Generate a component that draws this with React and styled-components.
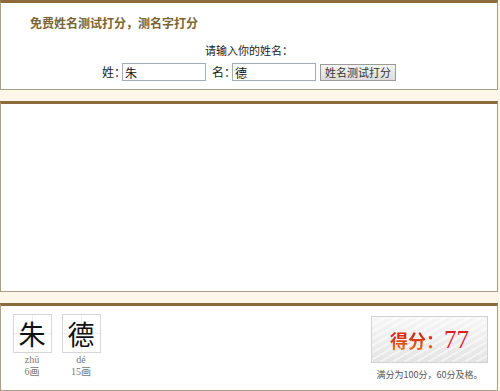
import React from "react";
import styled, { createGlobalStyle } from "styled-components";

const GlobalStyle = createGlobalStyle`
  html, body {
    margin: 0;
    padding: 0;
    background: #fcf7e8;
    font-family: "Noto Sans CJK SC", "Liberation Sans", sans-serif;
    font-size: 12px;
    color: #222;
  }
`;

const Page = styled.div`
  width: 498px;
  display: flex;
  flex-direction: column;
  gap: 11px;
`;

const Panel = styled.section`
  box-sizing: border-box;
  height: ${({ $h }) => $h}px;
  background: #fff;
  border: 1px solid #aa9f80;
  border-top: 3px solid #8b6b3c;
`;

const Head = styled(Panel)`
  padding: 12px 0 0 29px;
`;

const Title = styled.h1`
  margin: 0;
  font-size: 12px;
  font-weight: bold;
  color: #7a6634;
  line-height: 16px;
`;

const Prompt = styled.div`
  margin: 12px 0 0 -29px;
  text-align: center;
  font-size: 11px;
  line-height: 14px;
`;

const FormRow = styled.div`
  margin: 6px 0 0 -29px;
  display: flex;
  justify-content: center;
  align-items: center;
`;

const Label = styled.label`
  width: 20px;
  white-space: nowrap;
  line-height: 18px;
`;

const NameInput = styled.input`
  box-sizing: border-box;
  width: 84px;
  height: 18px;
  margin: 0 ${({ $gap }) => $gap}px 0 0;
  padding: 0 2px;
  border: 1px solid #a5acb5;
  font-family: inherit;
  font-size: 12px;
  color: #111;
`;

const Submit = styled.button`
  box-sizing: border-box;
  width: 76px;
  height: 17px;
  padding: 0;
  border: 1px solid #9a9a9a;
  background: linear-gradient(#f4f4f4, #dcdcdc);
  font-family: inherit;
  font-size: 11px;
  line-height: 15px;
  color: #333;
`;

const Result = styled(Panel)`
  padding: 8px 9px 0 11px;
  display: flex;
  justify-content: space-between;
  align-items: flex-start;
`;

const Chars = styled.div`
  display: flex;
  gap: 9px;
`;

const CharCell = styled.div`
  display: flex;
  flex-direction: column;
  align-items: center;
  width: 40px;
`;

const CharBox = styled.div`
  box-sizing: border-box;
  width: 39px;
  height: 39px;
  border: 1px solid #d6d6d6;
  display: flex;
  align-items: center;
  justify-content: center;
  font-size: 27px;
  line-height: 1;
  color: #111;
  background:
    linear-gradient(#eee, #eee) center / 1px 100% no-repeat,
    linear-gradient(#eee, #eee) center / 100% 1px no-repeat,
    #fff;
`;

const Small = styled.div`
  font-size: 10px;
  line-height: 12px;
  color: #777;
  font-family: "Liberation Serif", "Noto Sans CJK SC", serif;
  margin-top: ${({ $top }) => $top || 0}px;
`;

const ScoreCol = styled.div`
  display: flex;
  flex-direction: column;
  align-items: center;
  margin-top: 2px;
`;

const ScoreBox = styled.div`
  box-sizing: border-box;
  width: 117px;
  height: 47px;
  border: 1px solid #d2d2d2;
  display: flex;
  align-items: center;
  justify-content: center;
  gap: 0;
  background:
    repeating-linear-gradient(150deg, rgba(255,255,255,0.5) 0 2px, rgba(0,0,0,0) 2px 6px),
    linear-gradient(#f7f7f7, #e4e4e4);
`;

const ScoreLabel = styled.span`
  font-size: 18px;
  font-weight: bold;
  background: linear-gradient(#d22a14 35%, #f0801c);
  -webkit-background-clip: text;
  background-clip: text;
  color: transparent;
`;

const ScoreValue = styled.span`
  font-family: "Liberation Serif", serif;
  font-size: 25px;
  line-height: 1;
  color: #e01e28;
`;

const Note = styled.div`
  margin-top: 6px;
  font-size: 9px;
  color: #555;
  line-height: 12px;
`;

const chars = [
  { c: "朱", py: "zhū", strokes: "6画" },
  { c: "德", py: "dé", strokes: "15画" },
];

export default function App() {
  return (
    <>
      <GlobalStyle />
      <Page>
        <Head $h={90}>
          <Title>免费姓名测试打分，测名字打分</Title>
          <Prompt>请输入你的姓名：</Prompt>
          <FormRow>
            <Label>姓：</Label>
            <NameInput defaultValue="朱" $gap={6} />
            <Label>名：</Label>
            <NameInput defaultValue="德" $gap={4} />
            <Submit>姓名测试打分</Submit>
          </FormRow>
        </Head>
        <Panel $h={191} />
        <Result $h={88}>
          <Chars>
            {chars.map((ch) => (
              <CharCell key={ch.c}>
                <CharBox>{ch.c}</CharBox>
                <Small $top={1}>{ch.py}</Small>
                <Small>{ch.strokes}</Small>
              </CharCell>
            ))}
          </Chars>
          <ScoreCol>
            <ScoreBox>
              <ScoreLabel>得分：</ScoreLabel>
              <ScoreValue>77</ScoreValue>
            </ScoreBox>
            <Note>满分为100分，60分及格。</Note>
          </ScoreCol>
        </Result>
      </Page>
    </>
  );
}
